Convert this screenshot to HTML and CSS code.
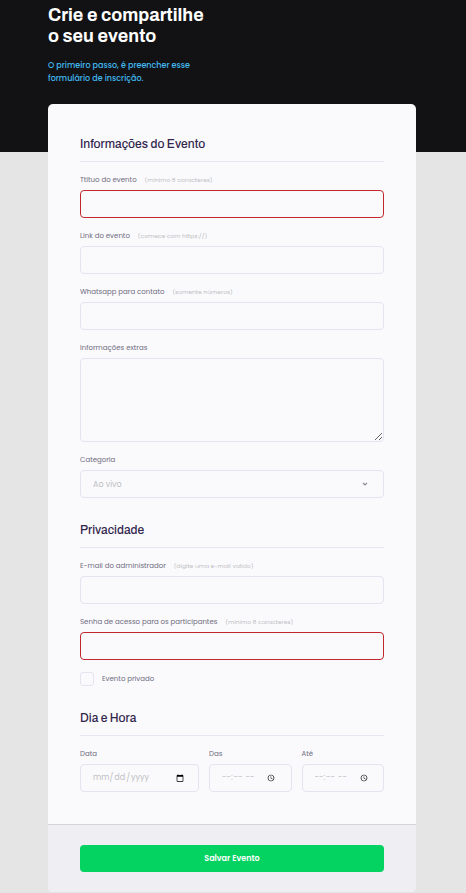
FILE: index.html
```html
<!DOCTYPE html>
<html lang="pt-BR">
<head>
  <meta charset="utf-8">
  <meta name="viewport" content="width=device-width, initial-scale=1">
  <title>Crie e compartilhe o seu evento</title>
  <link rel="stylesheet" href="styles.css">
</head>
<body>
  <header class="page-header">
    <h1>Crie e compartilhe<br>o seu evento</h1>
    <p>O primeiro passo, é preencher esse<br>formulário de inscrição.</p>
  </header>
  <main>
    <form class="card" novalidate>
      <div class="sections">
        <section class="section">
          <h2>Informações do Evento</h2>
          <div class="field">
            <label for="title">Ttituo do evento <span>(mínimo 8 caracteres)</span></label>
            <input class="control invalid" id="title" type="text">
          </div>
          <div class="field">
            <label for="link">Link do evento <span>(comece com https://)</span></label>
            <input class="control" id="link" type="url">
          </div>
          <div class="field">
            <label for="whatsapp">Whatsapp para contato <span>(somente números)</span></label>
            <input class="control" id="whatsapp" type="tel">
          </div>
          <div class="field">
            <label for="extras">Informações extras</label>
            <textarea class="control" id="extras"></textarea>
          </div>
          <div class="field">
            <label for="category">Categoria</label>
            <div class="select">
              <select class="control" id="category">
                <option>Ao vivo</option>
              </select>
              <svg viewBox="0 0 6 4" aria-hidden="true"><path d="M1 1l2 2 2-2"/></svg>
            </div>
          </div>
        </section>

        <section class="section">
          <h2>Privacidade</h2>
          <div class="field">
            <label for="email">E-mail do administrador <span>(digite uma e-mail valido)</span></label>
            <input class="control" id="email" type="email">
          </div>
          <div class="field">
            <label for="password">Senha de acesso para os participantes <span>(mínimo 8 caracteres)</span></label>
            <input class="control invalid" id="password" type="password">
          </div>
          <div class="check">
            <input id="private" type="checkbox">
            <label for="private">Evento privado</label>
          </div>
        </section>

        <section class="section">
          <h2>Dia e Hora</h2>
          <div class="schedule">
            <div class="field">
              <label for="date">Data</label>
              <input class="control" id="date" type="date">
            </div>
            <div class="field">
              <label for="from">Das</label>
              <input class="control" id="from" type="time">
            </div>
            <div class="field">
              <label for="to">Até</label>
              <input class="control" id="to" type="time">
            </div>
          </div>
        </section>
      </div>
      <footer class="actions">
        <button type="submit">Salvar Evento</button>
      </footer>
    </form>
  </main>
</body>
</html>
```
FILE: styles.css
```css
* {
  box-sizing: border-box;
  margin: 0;
}

body {
  background: #e5e5e5;
  color: #6f6c80;
  font-family: Poppins, Inter, "Liberation Sans", sans-serif;
  font-size: 7px;
  line-height: 12px;
}

.page-header {
  padding: 5px 48px 67px;
  background: #121214;
}

.page-header h1 {
  color: #fff;
  font: 700 18px/21px Archivo, "Liberation Sans", sans-serif;
}

.page-header p {
  margin-top: 12px;
  color: #42b8ee;
  font-size: 8px;
  font-weight: 500;
  line-height: 13px;
}

main {
  margin-top: -48px;
  padding: 0 50px 1px 48px;
}

.card {
  border-radius: 5px;
  background: #fafafc;
  overflow: hidden;
}

.sections {
  display: grid;
  gap: 24px;
  padding: 32px;
}

.section {
  display: grid;
  gap: 12px;
}

h2 {
  padding-bottom: 9px;
  border-bottom: 1px solid #e6e6f0;
  color: #32264d;
  font: 500 12px/16px Archivo, Inter, sans-serif;
}

.field {
  display: grid;
  gap: 4px;
  min-width: 0;
}

.field span {
  margin-left: 6px;
  color: #bfbfc3;
  font-size: 6px;
}

.control {
  display: block;
  width: 100%;
  min-width: 0;
  height: 28px;
  padding: 0 12px;
  border: 1px solid #e4e4f0;
  border-radius: 4px;
  background: #fafafc;
  color: #bfbfc3;
  font-family: inherit;
  font-size: 8px;
}

.control.invalid {
  border-color: #c1272d;
}

textarea.control {
  height: 84px;
  padding: 8px 12px;
  resize: vertical;
}

.schedule .control {
  padding: 0 12px;
}

.control::-webkit-datetime-edit-month-field,
.control::-webkit-datetime-edit-hour-field {
  padding: 0;
}

.select {
  position: relative;
}

.select select {
  appearance: none;
}

.select svg {
  position: absolute;
  top: 12px;
  right: 16px;
  width: 6px;
  height: 4px;
  fill: none;
  stroke: #8c8c92;
  stroke-width: 1.2;
}

.check {
  display: flex;
  align-items: center;
  gap: 8px;
}

.check input {
  appearance: none;
  width: 14px;
  height: 14px;
  border: 1px solid #e4e4f0;
  border-radius: 3px;
  background: #fafafc;
}

.schedule {
  display: grid;
  grid-template-columns: 13fr 9fr 9fr;
  gap: 10px;
}

.actions {
  padding: 20px 32px;
  border-top: 1px solid #d5d5da;
  background: #efeff3;
}

.actions button {
  display: block;
  width: 100%;
  height: 27px;
  border: 0;
  border-radius: 4px;
  background: #04d361;
  color: #fff;
  font-family: inherit;
  font-size: 8px;
  font-weight: 600;
}
```
